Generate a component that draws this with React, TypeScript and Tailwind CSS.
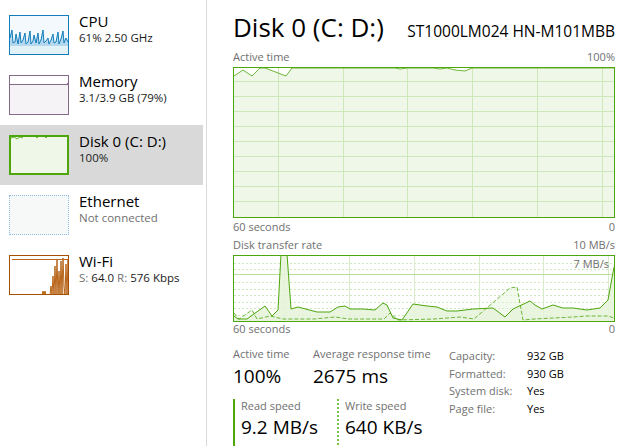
import React from "react";

const cpuLine =
  "0,22 2,14 3,27 5,26 6,18 8,28 10,16 11,27 13,24 15,17 16,28 18,26 20,15 21,28 23,25 24,19 26,27 28,17 29,28 31,24 33,14 34,27 36,25 38,22 39,28 41,24 43,18 44,27 46,26 48,16 49,28 51,23 53,15 54,27 56,22 58,26 60,24";

const activeLine =
  "0,8 9,2 18,8 26,0 31,0 52,8 58,0 161,0 166,1 173,0 199,0 206,1 213,0 221,2 231,3 238,0 380,0";

const readLine =
  "0,60 4,63 13,63 31,50 38,60 44,54 47,-2 53,-2 57,53 64,51 83,56 96,56 104,51 111,50 116,53 129,53 141,54 149,47 153,49 159,62 168,64 179,48 193,50 203,51 213,55 223,55 239,53 259,52 271,61 279,53 296,45 301,49 308,53 319,49 329,52 339,52 353,54 366,52 374,44 380,11";

const writeLine =
  "0,57 5,63 18,54 23,63 36,60 49,63 80,63 101,61 115,63 150,63 156,57 164,64 200,63 226,61 240,63 276,32 283,31 289,64 300,63 339,61 353,60 374,60 380,62";

function CpuThumb() {
  return (
    <svg width="60" height="40" className="block border border-[#117dbb] bg-[#f3f9fc]">
      <rect x="0" y="29" width="60" height="11" fill="#e3f2f6" />
      <polygon points={cpuLine + " 60,30 0,30"} fill="#b6d8ee" />
      <polyline points={cpuLine} fill="none" stroke="#117dbb" strokeWidth="1" />
    </svg>
  );
}

function MemoryThumb() {
  return (
    <svg width="60" height="40" className="block border border-[#85688a] bg-white">
      <rect x="0" y="9" width="60" height="31" fill="#f6f3f7" />
      <line x1="0" y1="8.5" x2="57" y2="8.5" stroke="#85688a" />
      <rect x="57" y="7" width="2" height="2" fill="#85688a" />
    </svg>
  );
}

function DiskThumb() {
  return (
    <svg width="60" height="40" className="block border-2 border-[#4da60c] bg-[#eff7e8]">
      <polyline points="0,1 3,0 6,2 9,0 12,1" fill="none" stroke="#6cb63a" />
      <line x1="25" y1="0.5" x2="27" y2="0.5" stroke="#6cb63a" />
      <line x1="34" y1="0.5" x2="36" y2="0.5" stroke="#6cb63a" />
    </svg>
  );
}

function EthernetThumb() {
  return (
    <svg width="60" height="40" className="block border border-dotted border-[#8fbde6] bg-[#f7f9f8]" />
  );
}

function WifiThumb() {
  const spikes =
    "40,39 41,30 42,39 43,20 44,39 45,10 46,39 47,3 48,39 49,15 50,39 51,5 52,39 53,2 54,30 55,39 56,8 57,39 58,4 59,39";
  return (
    <svg width="60" height="40" className="block border border-[#a74f01] bg-white">
      <line x1="2" y1="3.5" x2="58" y2="3.5" stroke="#b8651a" />
      <polygon points={"40,40 " + spikes + " 60,40"} fill="#f0dcc6" />
      <polyline points={spikes} fill="none" stroke="#b8651a" />
      <polyline points="32,39 33,35 34,38 35,35 36,39" fill="#d9a36c" stroke="#b8651a" />
    </svg>
  );
}

function SideItem({
  thumb,
  title,
  sub,
  selected,
}: {
  thumb: React.ReactNode;
  title: string;
  sub: React.ReactNode;
  selected?: boolean;
}) {
  return (
    <div className={`flex h-[60px] gap-[10px] pl-[9px] pt-[10px] ${selected ? "bg-[#d9d9d9]" : ""}`}>
      {thumb}
      <div className="-mt-[3px] flex flex-col">
        <div className="text-[15px] leading-[19px] text-black">{title}</div>
        <div className="text-[11.5px] leading-[13px] text-[#1b1b1b]">{sub}</div>
      </div>
    </div>
  );
}

function ActiveChart() {
  const hs = [1, 2, 3, 4, 5, 6, 7, 8, 9];
  const vs = [44, 109, 173, 238, 303, 368];
  return (
    <div className="h-[151px] border border-[#4da60c] bg-white">
      <svg width="380" height="149" className="block">
        <polygon points={activeLine + " 380,149 0,149"} fill="#eff7e8" />
        {hs.map((k) => (
          <line key={k} x1="0" x2="380" y1={15 * k - 1.5} y2={15 * k - 1.5} stroke="#cde7b8" />
        ))}
        {vs.map((x) => (
          <line key={x} x1={x + 0.5} x2={x + 0.5} y1="0" y2="149" stroke="#cde7b8" />
        ))}
        <polyline points={activeLine} fill="none" stroke="#6cb63a" strokeWidth="1" />
      </svg>
    </div>
  );
}

function TransferChart() {
  const hs = [6.5, 13, 26, 32.5, 39, 45.5, 52, 58.5];
  const vs = [50, 115, 180, 245, 309, 374];
  return (
    <div className="relative h-[67px] border border-[#4da60c] bg-white">
      <svg width="380" height="65" className="block">
        {hs.map((y) => (
          <line key={y} x1="0" x2="380" y1={Math.round(y) + 0.5} y2={Math.round(y) + 0.5} stroke="#cfe7bd" strokeDasharray="2 2" />
        ))}
        {vs.map((x) => (
          <line key={x} x1={x + 0.5} x2={x + 0.5} y1="0" y2="65" stroke="#d8ecc9" />
        ))}
        <line x1="0" x2="380" y1="18.5" y2="18.5" stroke="#b9dd9c" />
        <polygon points={readLine + " 380,65 0,65"} fill="#e6f3db" fillOpacity="0.85" />
        <polygon points={writeLine + " 380,65 0,65"} fill="#e6f3db" fillOpacity="0.5" />
        <polyline points={writeLine} fill="none" stroke="#6cb63a" strokeDasharray="4 2" />
        <polyline points={readLine} fill="none" stroke="#4da60c" />
      </svg>
      <span className="absolute right-[5px] top-[1px] text-[11px] leading-[14px] text-[#707070]">7 MB/s</span>
    </div>
  );
}

export default function App() {
  return (
    <div className="flex h-[446px] w-[624px] overflow-hidden bg-white font-['Open_Sans',sans-serif]">
      <aside className="flex w-[203px] shrink-0 flex-col pt-[5px]">
        <SideItem thumb={<CpuThumb />} title="CPU" sub="61%  2.50 GHz" />
        <SideItem thumb={<MemoryThumb />} title="Memory" sub="3.1/3.9 GB (79%)" />
        <SideItem thumb={<DiskThumb />} title="Disk 0 (C: D:)" sub="100%" selected />
        <SideItem
          thumb={<EthernetThumb />}
          title="Ethernet"
          sub={<span className="text-[#707070]">Not connected</span>}
        />
        <SideItem
          thumb={<WifiThumb />}
          title="Wi-Fi"
          sub={
            <>
              <span className="text-[#707070]">S:</span> 64.0 <span className="text-[#707070]">R:</span> 576 Kbps
            </>
          }
        />
      </aside>
      <div className="ml-[3px] w-px shrink-0 bg-[#dadada]" />
      <main className="flex flex-1 flex-col pl-[26px] pr-[9px] pt-[12px]">
        <div className="flex h-[38px] items-baseline justify-between">
          <span className="text-[26px] leading-[30px] text-black">Disk 0 (C: D:)</span>
          <span className="text-[15.5px] leading-[20px] text-black">ST1000LM024 HN-M101MBB</span>
        </div>
        <div className="flex h-[17px] justify-between text-[11px] leading-[14px] text-[#707070]">
          <span>Active time</span>
          <span>100%</span>
        </div>
        <ActiveChart />
        <div className="flex h-[20px] justify-between pt-[2px] text-[11px] leading-[14px] text-[#707070]">
          <span>60 seconds</span>
          <span>0</span>
        </div>
        <div className="flex h-[17px] justify-between text-[11px] leading-[14px] text-[#707070]">
          <span>Disk transfer rate</span>
          <span>10 MB/s</span>
        </div>
        <TransferChart />
        <div className="flex h-[25px] justify-between text-[11px] leading-[14px] text-[#707070]">
          <span>60 seconds</span>
          <span>0</span>
        </div>
        <div className="flex items-start">
          <div className="flex w-[216px] flex-col">
            <div className="flex">
              <div className="w-[80px]">
                <div className="text-[11px] leading-[14px] text-[#707070]">Active time</div>
                <div className="mt-[3px] text-[19px] leading-[24px] text-black">100%</div>
              </div>
              <div>
                <div className="text-[11px] leading-[14px] text-[#707070]">Average response time</div>
                <div className="mt-[3px] text-[19px] leading-[24px] text-black">2675 ms</div>
              </div>
            </div>
            <div className="mt-[11px] flex h-[47px]">
              <div className="flex w-[104px] border-l-2 border-[#4da60c] pl-[6px]">
                <div>
                  <div className="text-[11px] leading-[14px] text-[#707070]">Read speed</div>
                  <div className="mt-[2px] text-[19px] leading-[24px] text-black">9.2 MB/s</div>
                </div>
              </div>
              <div className="w-[2px] bg-[repeating-linear-gradient(to_bottom,#7cc242_0_2px,transparent_2px_4px)]" />
              <div className="pl-[6px]">
                <div className="text-[11px] leading-[14px] text-[#707070]">Write speed</div>
                <div className="mt-[2px] text-[19px] leading-[24px] text-black">640 KB/s</div>
              </div>
            </div>
          </div>
          <div className="grid grid-cols-[78px_auto] content-start text-[11px] leading-[17.7px]">
            <span className="text-[#707070]">Capacity:</span>
            <span className="text-black">932 GB</span>
            <span className="text-[#707070]">Formatted:</span>
            <span className="text-black">930 GB</span>
            <span className="text-[#707070]">System disk:</span>
            <span className="text-black">Yes</span>
            <span className="text-[#707070]">Page file:</span>
            <span className="text-black">Yes</span>
          </div>
        </div>
      </main>
    </div>
  );
}
